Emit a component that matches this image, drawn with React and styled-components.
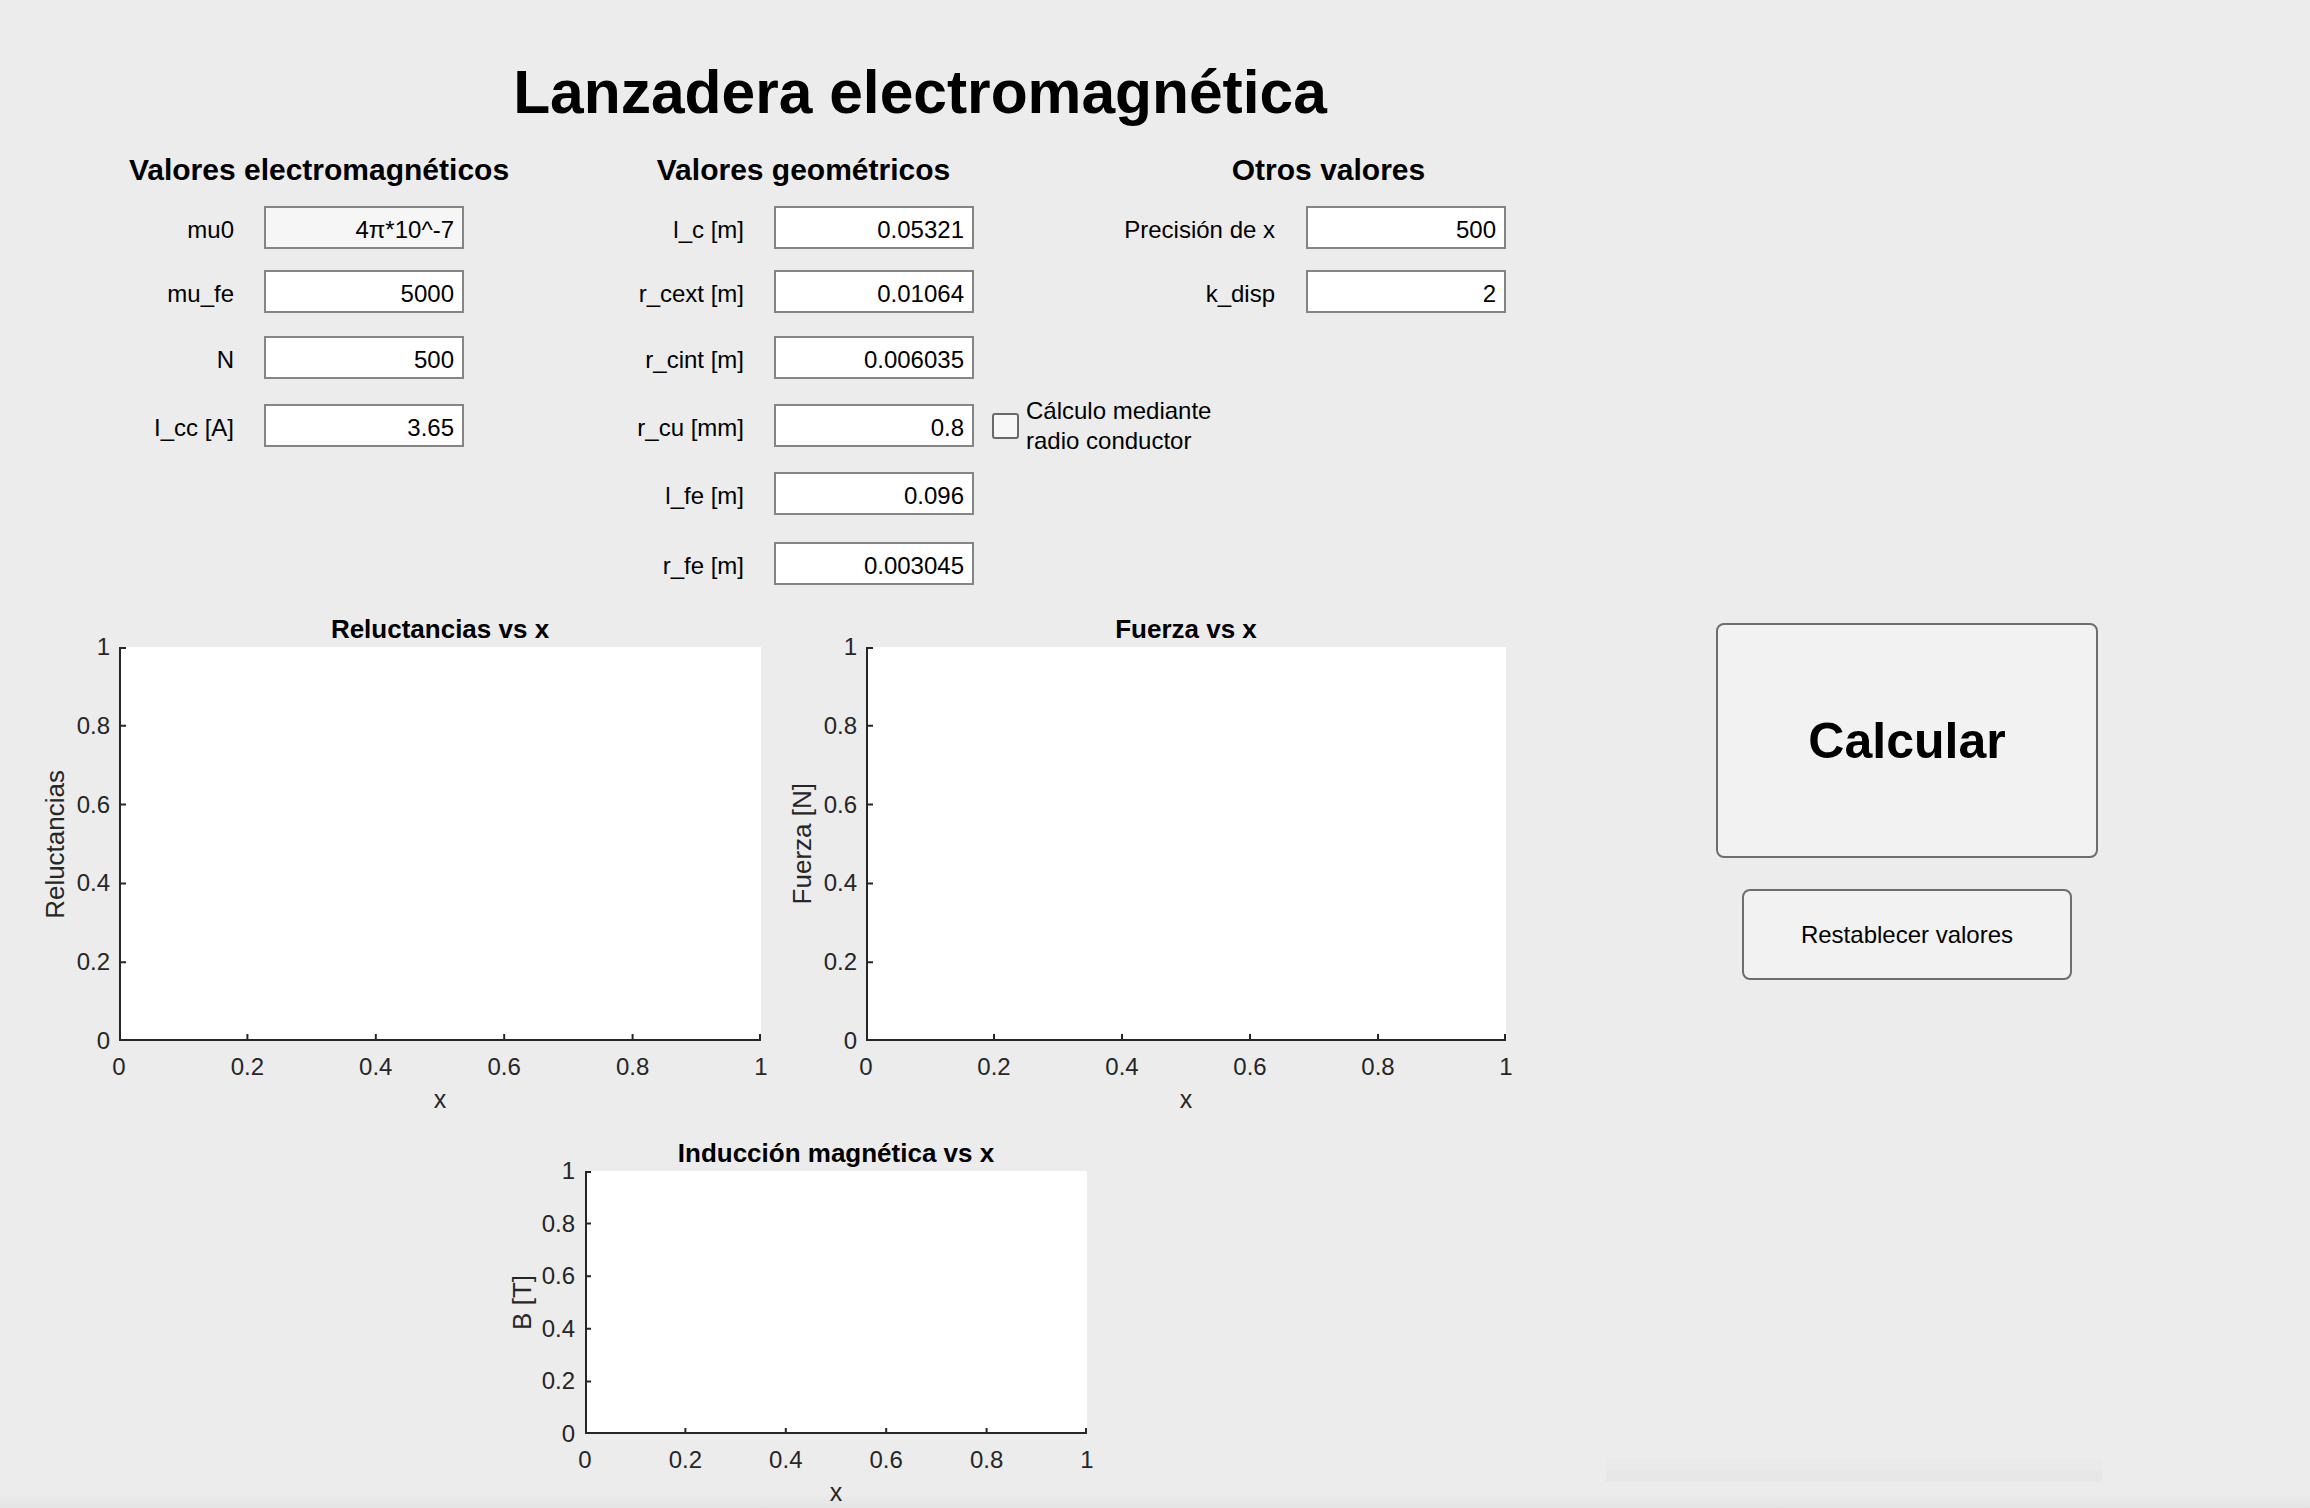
import styled, { createGlobalStyle } from 'styled-components';

const GlobalStyle = createGlobalStyle`
  html, body {
    margin: 0;
    padding: 0;
  }

  body {
    background: #ececec;
    font-family: "Liberation Sans", Arial, Helvetica, sans-serif;
    color: #000;
  }
`;

const Window = styled.div`
  width: 2310px;
  height: 1508px;
  display: flex;
  overflow: hidden;
  background: linear-gradient(to bottom, #ececec 0, #ececec 1494px, #e3e3e3 1508px);
`;

const LeftPane = styled.main`
  width: 1530px;
  flex: none;
  display: flex;
  flex-direction: column;
`;

const Title = styled.h1`
  width: 1000px;
  margin: 56px 0 0 420px;
  font-size: 60.5px;
  line-height: 72px;
  font-weight: 700;
  text-align: center;
  white-space: nowrap;
`;

// rows between the fields are not evenly spaced in the original figure
const FormGrid = styled.section`
  display: grid;
  grid-template-columns: 150px 30px 200px 130px 150px 30px 200px 131px 170px 31px 200px;
  grid-template-rows: 34px 24px 43px 21px 43px 23px 43px 25px 43px 25px 43px 27px 43px;
  margin: 20px 0 0 84px;
`;

const Heading = styled.h2`
  grid-column: ${(p) => p.$span};
  grid-row: 1;
  align-self: start;
  justify-self: start;
  width: 400px;
  margin: 5px 0 0 ${(p) => p.$shift}px;
  font-size: 30px;
  line-height: 34px;
  font-weight: 700;
  text-align: center;
  white-space: nowrap;
`;

const FieldLabel = styled.label`
  grid-column: ${(p) => p.$col};
  grid-row: ${(p) => p.$row};
  justify-self: end;
  align-self: center;
  padding-top: 4px;
  font-size: 24px;
  line-height: 28px;
  white-space: nowrap;
`;

const Field = styled.input`
  grid-column: ${(p) => p.$col};
  grid-row: ${(p) => p.$row};
  box-sizing: border-box;
  width: 200px;
  height: 43px;
  margin: 0;
  padding: 4px 8px 0;
  border: 2px solid #858585;
  border-radius: 0;
  background: ${(p) => (p.$muted ? '#f6f6f6' : '#ffffff')};
  font-family: "Liberation Sans", Arial, sans-serif;
  font-size: 24px;
  color: #000;
  text-align: right;
  outline: none;
`;

const CheckRow = styled.label`
  grid-column: 8 / 12;
  grid-row: 9;
  align-self: center;
  display: flex;
  align-items: center;
  gap: 7px;
  margin-left: 18px;
  font-size: 24px;
  line-height: 30px;
  white-space: nowrap;
`;

const CheckBox = styled.input`
  appearance: none;
  flex: none;
  box-sizing: border-box;
  width: 27px;
  height: 26px;
  margin: 0;
  border: 2px solid #6a6a6a;
  border-radius: 3px;
  background: #f7f7f7;
`;

const ChartsRow = styled.div`
  display: flex;
  align-items: flex-start;
  gap: ${(p) => p.$gap || 0}px;
  margin-top: ${(p) => p.$top}px;
  padding-left: ${(p) => p.$left}px;
`;

const ChartGrid = styled.figure`
  margin: 0;
  display: grid;
  grid-template-columns: 28px ${(p) => p.$tick}px ${(p) => p.$w}px;
  grid-template-rows: 33px ${(p) => p.$h}px auto auto;
  color: #262626;
`;

const ChartTitle = styled.figcaption`
  grid-column: 3;
  grid-row: 1;
  align-self: start;
  font-size: 26px;
  line-height: 30px;
  font-weight: 700;
  color: #000;
  text-align: center;
  white-space: nowrap;
`;

const YLabel = styled.div`
  grid-column: 1;
  grid-row: 2;
  align-self: center;
  justify-self: start;
  writing-mode: vertical-rl;
  transform: rotate(180deg);
  font-size: 26px;
  line-height: 28px;
  white-space: nowrap;
`;

const YTicks = styled.div`
  grid-column: 2;
  grid-row: 2;
  display: grid;
  grid-template-rows: repeat(6, 1fr);
  margin: ${(p) => -p.$h / 10}px 0;
  padding-right: ${(p) => p.$pad}px;
  font-size: 24px;
  line-height: 28px;
  text-align: right;

  span {
    align-self: center;
  }
`;

const XTicks = styled.div`
  grid-column: 3;
  grid-row: 3;
  display: grid;
  grid-template-columns: repeat(6, 1fr);
  margin: 12px ${(p) => -p.$w / 10}px 0;
  font-size: 24px;
  line-height: 28px;
  text-align: center;
`;

const XLabel = styled.div`
  grid-column: 3;
  grid-row: 4;
  margin-top: 3px;
  font-size: 25px;
  line-height: 30px;
  text-align: center;
`;

const PlotArea = styled.svg`
  grid-column: 3;
  grid-row: 2;
  display: block;
`;

const SidePane = styled.aside`
  width: 754px;
  flex: none;
  display: flex;
  flex-direction: column;
  align-items: center;
  padding-top: 623px;
`;

const Button = styled.button`
  box-sizing: border-box;
  width: ${(p) => (p.$big ? 382 : 330)}px;
  height: ${(p) => (p.$big ? 235 : 91)}px;
  margin-top: ${(p) => (p.$big ? 0 : 31)}px;
  border: 2px solid #6e6e6e;
  border-radius: 8px;
  background: #f2f2f2;
  font-family: "Liberation Sans", Arial, sans-serif;
  font-size: ${(p) => (p.$big ? 50 : 24)}px;
  font-weight: ${(p) => (p.$big ? 700 : 400)};
  color: #000;
  padding: 0;
`;

const FaintBar = styled.div`
  align-self: flex-start;
  width: 496px;
  height: 24px;
  margin: 478px 0 0 76px;
  background: linear-gradient(to bottom, #eaeaea 0, #eaeaea 50%, #e7e7e7 50%, #e7e7e7 100%);
`;

const columns = [
  {
    span: '1 / 5',
    shift: 35,
    title: 'Valores electromagnéticos',
    label: 1,
    input: 3,
    fields: [
      ['mu0', '4π*10^-7', true],
      ['mu_fe', '5000'],
      ['N', '500'],
      ['I_cc [A]', '3.65'],
    ],
  },
  {
    span: '5 / 9',
    shift: 9.5,
    title: 'Valores geométricos',
    label: 5,
    input: 7,
    fields: [
      ['l_c [m]', '0.05321'],
      ['r_cext [m]', '0.01064'],
      ['r_cint [m]', '0.006035'],
      ['r_cu [mm]', '0.8'],
      ['l_fe [m]', '0.096'],
      ['r_fe [m]', '0.003045'],
    ],
  },
  {
    span: '9 / 12',
    shift: 23.5,
    title: 'Otros valores',
    label: 9,
    input: 11,
    fields: [
      ['Precisión de x', '500'],
      ['k_disp', '2'],
    ],
  },
];

const ticks = ['0', '0.2', '0.4', '0.6', '0.8', '1'];

function Axes({ w, h, len }) {
  const steps = [1, 2, 3, 4, 5];
  let d = `M1 0 V${h - 1} H${w}`;
  steps.forEach((i) => {
    const y = Math.max(1, h - (i * h) / 5);
    const x = Math.min(w - 1, (i * w) / 5);
    d += ` M1 ${y} H${1 + len} M${x} ${h - 1} V${h - 1 - len}`;
  });
  return (
    <PlotArea width={w} height={h} viewBox={`0 0 ${w} ${h}`}>
      <rect width={w} height={h} fill="#ffffff" />
      <path d={d} stroke="#262626" strokeWidth="2" fill="none" />
    </PlotArea>
  );
}

function Chart({ title, ylabel, w, h, tick = 50, pad = 9, len = 6 }) {
  return (
    <ChartGrid $w={w} $h={h} $tick={tick}>
      <ChartTitle>{title}</ChartTitle>
      <YLabel>{ylabel}</YLabel>
      <YTicks $h={h} $pad={pad}>
        {[...ticks].reverse().map((t) => (
          <span key={t}>{t}</span>
        ))}
      </YTicks>
      <Axes w={w} h={h} len={len} />
      <XTicks $w={w}>
        {ticks.map((t) => (
          <span key={t}>{t}</span>
        ))}
      </XTicks>
      <XLabel>x</XLabel>
    </ChartGrid>
  );
}

export default function App() {
  return (
    <>
      <GlobalStyle />
      <Window>
        <LeftPane>
          <Title>Lanzadera electromagnética</Title>

          <FormGrid>
            {columns.map((c) => (
              <Heading key={c.title} $span={c.span} $shift={c.shift}>
                {c.title}
              </Heading>
            ))}
            {columns.map((c) =>
              c.fields.map(([name, value, muted], i) => [
                <FieldLabel key={name + '-l'} $col={c.label} $row={3 + i * 2}>
                  {name}
                </FieldLabel>,
                <Field
                  key={name + '-v'}
                  $col={c.input}
                  $row={3 + i * 2}
                  $muted={muted}
                  value={value}
                  readOnly
                />,
              ])
            )}
            <CheckRow>
              <CheckBox type="checkbox" />
              <span>
                Cálculo mediante
                <br />
                radio conductor
              </span>
            </CheckRow>
          </FormGrid>

          <ChartsRow $top={29} $left={41} $gap={27}>
            <Chart title="Reluctancias vs x" ylabel="Reluctancias" w={642} h={394} />
            <Chart title="Fuerza vs x" ylabel="Fuerza [N]" w={640} h={394} />
          </ChartsRow>

          <ChartsRow $top={24} $left={508}>
            <Chart
              title="Inducción magnética vs x"
              ylabel="B [T]"
              w={502}
              h={263}
              tick={49}
              pad={10}
              len={5}
            />
          </ChartsRow>
        </LeftPane>

        <SidePane>
          <Button $big>Calcular</Button>
          <Button>Restablecer valores</Button>
          <FaintBar />
        </SidePane>
      </Window>
    </>
  );
}
